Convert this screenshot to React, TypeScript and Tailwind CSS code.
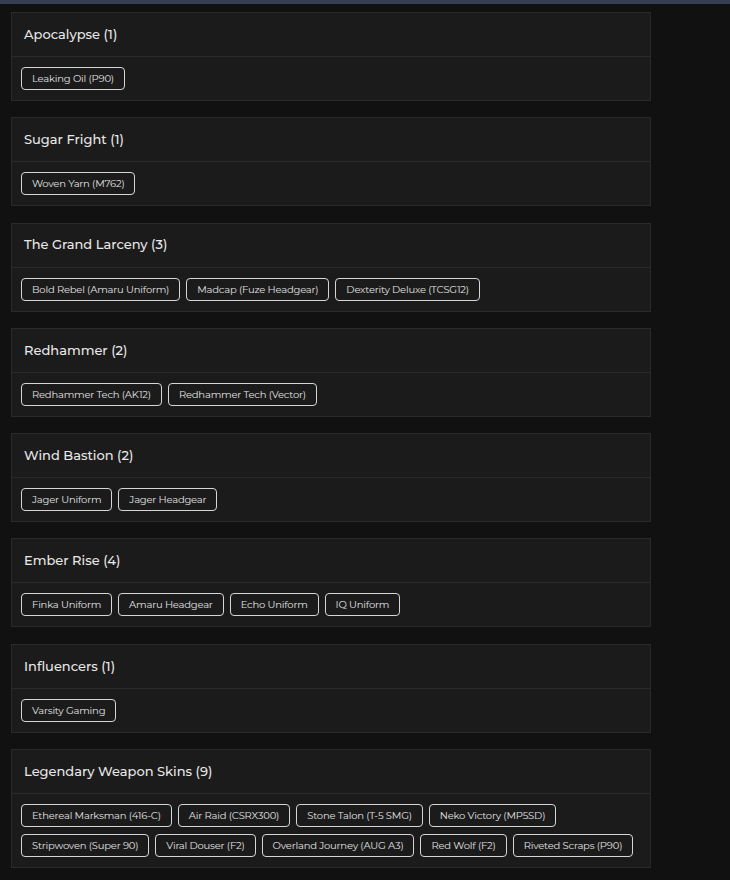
import React from "react";

const groups: { name: string; items: string[] }[] = [
  { name: "Apocalypse", items: ["Leaking Oil (P90)"] },
  { name: "Sugar Fright", items: ["Woven Yarn (M762)"] },
  {
    name: "The Grand Larceny",
    items: ["Bold Rebel (Amaru Uniform)", "Madcap (Fuze Headgear)", "Dexterity Deluxe (TCSG12)"],
  },
  { name: "Redhammer", items: ["Redhammer Tech (AK12)", "Redhammer Tech (Vector)"] },
  { name: "Wind Bastion", items: ["Jager Uniform", "Jager Headgear"] },
  { name: "Ember Rise", items: ["Finka Uniform", "Amaru Headgear", "Echo Uniform", "IQ Uniform"] },
  { name: "Influencers", items: ["Varsity Gaming"] },
  {
    name: "Legendary Weapon Skins",
    items: [
      "Ethereal Marksman (416-C)",
      "Air Raid (CSRX300)",
      "Stone Talon (T-5 SMG)",
      "Neko Victory (MP5SD)",
      "Stripwoven (Super 90)",
      "Viral Douser (F2)",
      "Overland Journey (AUG A3)",
      "Red Wolf (F2)",
      "Riveted Scraps (P90)",
    ],
  },
];

export default function App() {
  return (
    <div
      className="min-h-[880px] w-[730px] bg-[#111111] text-[#e6e6e6]"
      style={{ fontFamily: "Montserrat, 'Open Sans', 'Noto Sans', sans-serif" }}
    >
      <div className="h-[4px] bg-[#353e53]" />
      <div className="flex flex-col gap-[16.3px] pl-[11px] pt-[8px] pb-[10px]">
        {groups.map((g) => (
          <div key={g.name} className="w-[640px] border border-[#2a2a2a] bg-[#1b1b1b]">
            <div className="flex h-[44px] items-center border-b border-[#2a2a2a] pl-[12px] text-[13px] font-medium text-[#e8e8e8]">
              {g.name} ({g.items.length})
            </div>
            <div className="flex flex-wrap gap-x-[6px] gap-y-[7px] px-[9px] py-[10px]">
              {g.items.map((it) => (
                <span
                  key={it}
                  className="flex h-[23px] items-center rounded-[4px] border border-[#d6d6d6] px-[10px] text-[10px] tracking-[-0.2px] text-[#e0e0e0]"
                >
                  {it}
                </span>
              ))}
            </div>
          </div>
        ))}
      </div>
    </div>
  );
}
